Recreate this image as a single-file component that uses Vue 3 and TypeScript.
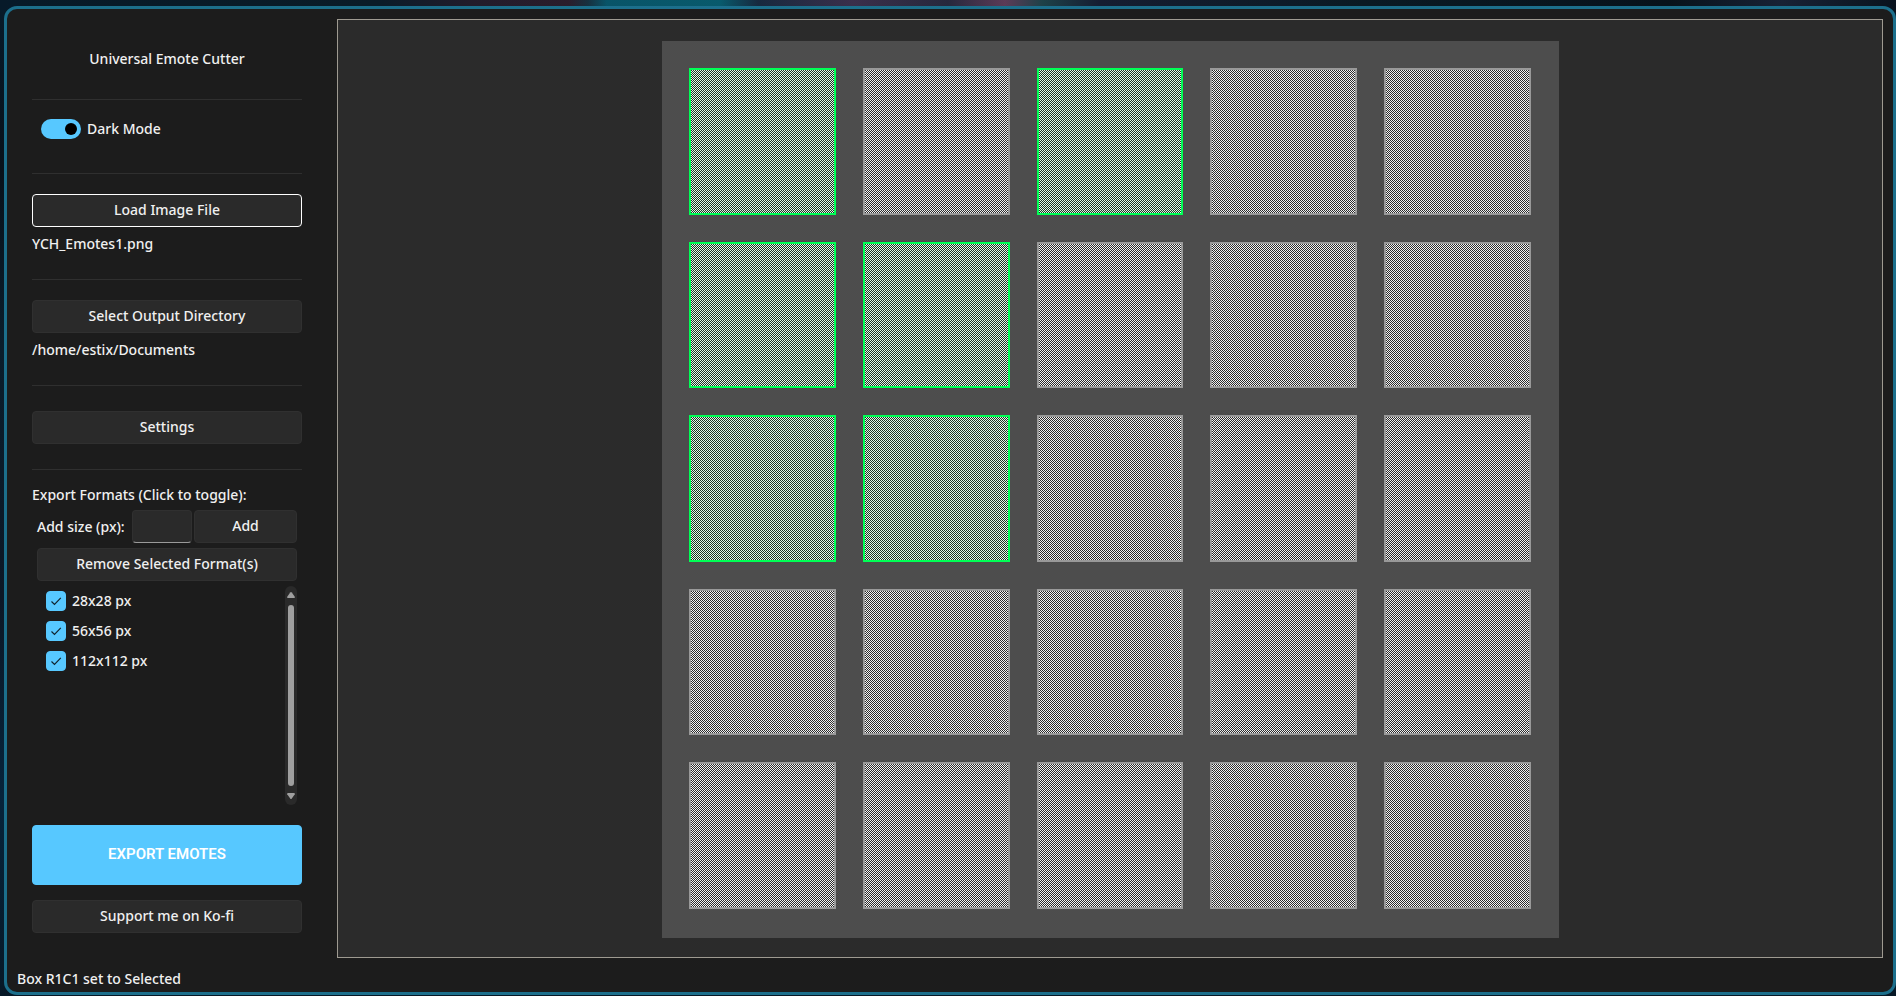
<script setup lang="ts">
import { computed, ref } from 'vue'

interface ExportFormat {
  size: number
  enabled: boolean
}

const GRID_SIZE = 5

const darkMode = ref(true)
const imageName = ref('YCH_Emotes1.png')
const outputDirectory = ref('/home/estix/Documents')
const newSize = ref('')
const status = ref('Box R1C1 set to Selected')

const formats = ref<ExportFormat[]>([
  { size: 28, enabled: true },
  { size: 56, enabled: true },
  { size: 112, enabled: true },
])

const selected = ref<Set<number>>(new Set([0, 2, 5, 6, 10, 11]))
const boxes = computed(() => Array.from({ length: GRID_SIZE * GRID_SIZE }, (_, i) => i))

function boxName(index: number): string {
  return `R${Math.floor(index / GRID_SIZE) + 1}C${(index % GRID_SIZE) + 1}`
}

function toggleBox(index: number): void {
  const next = new Set(selected.value)
  const on = !next.delete(index)
  if (on) next.add(index)
  selected.value = next
  status.value = `Box ${boxName(index)} set to ${on ? 'Selected' : 'Unselected'}`
}

function addFormat(): void {
  const size = Number.parseInt(newSize.value, 10)
  if (size > 0 && !formats.value.some((f) => f.size === size)) {
    formats.value.push({ size, enabled: true })
  }
  newSize.value = ''
}

function removeFormats(): void {
  formats.value = formats.value.filter((f) => !f.enabled)
}
</script>

<template>
  <div class="desktop">
    <div class="window">
      <div class="body">
        <aside class="sidebar">
          <h1 class="title">Universal Emote Cutter</h1>
          <hr class="rule" />
          <label class="switch">
            <input v-model="darkMode" type="checkbox" class="switch-input" />
            <span>Dark Mode</span>
          </label>
          <hr class="rule" />
          <button type="button" class="btn focused">Load Image File</button>
          <p class="path">{{ imageName }}</p>
          <hr class="rule" />
          <button type="button" class="btn">Select Output Directory</button>
          <p class="path">{{ outputDirectory }}</p>
          <hr class="rule" />
          <button type="button" class="btn settings">Settings</button>
          <hr class="rule" />

          <section class="formats">
            <h2 class="heading">Export Formats (Click to toggle):</h2>
            <form class="add-row" @submit.prevent="addFormat">
              <label for="size">Add size (px):</label>
              <input id="size" v-model="newSize" type="text" class="entry" />
              <button type="submit" class="btn add">Add</button>
            </form>
            <button type="button" class="btn remove" @click="removeFormats">Remove Selected Format(s)</button>
            <div class="list">
              <div class="items">
                <label v-for="format in formats" :key="format.size" class="item">
                  <span class="check">
                    <input v-model="format.enabled" type="checkbox" class="check-input" />
                    <svg v-if="format.enabled" class="tick" viewBox="0 0 20 20" aria-hidden="true">
                      <path d="M5.5 10.5 L8.5 13.5 L14.8 6.8" />
                    </svg>
                  </span>
                  <span>{{ format.size }}x{{ format.size }} px</span>
                </label>
              </div>
              <div class="scrollbar" aria-hidden="true">
                <svg viewBox="0 0 8 6"><path d="M3.2 0.6 Q4 -0.4 4.8 0.6 L7.8 4.8 Q8 6 7 6 H1 Q0 6 0.2 4.8 Z" /></svg>
                <div class="thumb"></div>
                <svg viewBox="0 0 8 6"><path d="M3.2 5.4 Q4 6.4 4.8 5.4 L7.8 1.2 Q8 0 7 0 H1 Q0 0 0.2 1.2 Z" /></svg>
              </div>
            </div>
          </section>

          <button type="button" class="btn export">EXPORT EMOTES</button>
          <button type="button" class="btn support">Support me on Ko-fi</button>
        </aside>

        <main class="canvas">
          <div class="sheet">
            <button
              v-for="i in boxes"
              :key="i"
              type="button"
              class="box"
              :class="{ on: selected.has(i) }"
              :aria-label="boxName(i)"
              :aria-pressed="selected.has(i)"
              @click="toggleBox(i)"
            ></button>
          </div>
        </main>
      </div>
      <footer class="status">{{ status }}</footer>
    </div>
  </div>
</template>

<style>
body {
  margin: 0;
  background: #07131c;
}
</style>

<style scoped>
* {
  box-sizing: border-box;
}

.desktop {
  display: flex;
  height: 100vh;
  padding: 6px 0 1px 4px;
  background:
    linear-gradient(
        90deg,
        #071a29 0%,
        #0a1c29 20%,
        #221c2b 25%,
        #2a1d2c 30%,
        #17303f 31%,
        #085468 32%,
        #085a6c 38%,
        #17293f 40%,
        #3a2f4b 45%,
        #26283d 50%,
        #5c3b57 53%,
        #1d4148 55%,
        #151d31 58%,
        #0a1a24 72%,
        #07121b 88%,
        #182235 94%,
        #09131e 100%
      )
      top / 100% 12px no-repeat,
    linear-gradient(180deg, #071a29 0%, #08111a 17%, #0a1d2b 35%, #0c1725 60%, #06233a 80%, #071826 100%);
  color: #f0f0f0;
  font: 500 14px/20px 'Noto Sans', 'Open Sans', sans-serif;
}

.window {
  flex: 1;
  display: flex;
  flex-direction: column;
  min-width: 0;
  border: 3px solid #1c6f8c;
  border-radius: 13px;
  background: #1c1c1c;
}

.body {
  flex: 1;
  display: flex;
  min-height: 0;
  padding: 10px 10px 0 25px;
}

.sidebar {
  flex: 0 0 270px;
  display: flex;
  flex-direction: column;
  margin-right: 35px;
  padding: 30px 0 25px;
}

.title,
.heading,
.path {
  margin: 0;
  font-size: 14px;
  font-weight: 500;
}

.title {
  margin-bottom: 30px;
  text-align: center;
}

.rule {
  flex: none;
  width: 100%;
  height: 1px;
  margin: 0;
  border: 0;
  background: #2f2f2f;
}

.switch {
  display: flex;
  align-items: center;
  gap: 6px;
  margin: 19px 0 34px 9px;
}

.switch-input {
  display: flex;
  align-items: center;
  justify-content: flex-end;
  width: 40px;
  height: 20px;
  margin: 0;
  padding: 4px;
  border-radius: 10px;
  background: #57c8ff;
  appearance: none;
}

.switch-input::before {
  content: '';
  width: 12px;
  height: 12px;
  border-radius: 50%;
  background: #000;
}

.switch-input:not(:checked) {
  justify-content: flex-start;
  background: #5a5a5a;
}

.btn {
  flex: none;
  height: 33px;
  padding: 0 8px 2px;
  border: 1px solid #303030;
  border-radius: 4px;
  background: #2a2a2a;
  color: inherit;
  font: inherit;
}

.rule + .btn {
  margin-top: 20px;
}

.focused {
  border-color: #fff;
}

.path {
  margin: 7px 0 25px;
}

.rule + .settings {
  margin: 25px 0;
}

.formats {
  flex: 1;
  display: flex;
  flex-direction: column;
  gap: 5px;
  min-height: 0;
  padding-top: 15px;
}

.add-row {
  display: flex;
  align-items: center;
  gap: 2px;
  margin: 0 5px;
}

.add-row label {
  flex: none;
  width: 93px;
  white-space: nowrap;
}

.entry {
  width: 60px;
  height: 33px;
  padding: 0 8px;
  border: 1px solid #303030;
  border-bottom-color: #9a9a9a;
  border-radius: 4px;
  outline: 0;
  background: #2a2a2a;
  color: inherit;
  font: inherit;
}

.add {
  flex: 1;
}

.remove {
  margin: 0 5px;
}

.list {
  flex: 1;
  display: flex;
  justify-content: space-between;
  min-height: 0;
  margin: 0 5px;
}

.items {
  display: flex;
  flex-direction: column;
  gap: 10px;
  padding: 5px 9px;
}

.item {
  display: flex;
  align-items: center;
  gap: 6px;
}

.check {
  display: grid;
  width: 20px;
  height: 20px;
}

.check-input,
.tick {
  grid-area: 1 / 1;
  width: 20px;
  height: 20px;
  margin: 0;
}

.check-input {
  border: 1px solid #8a8a8a;
  border-radius: 4px;
  appearance: none;
}

.check-input:checked {
  border-color: #57c8ff;
  background: #57c8ff;
}

.tick {
  fill: none;
  stroke: #10222c;
  stroke-width: 1.2;
  pointer-events: none;
}

.scrollbar {
  display: flex;
  flex-direction: column;
  align-items: center;
  gap: 7px;
  width: 12px;
  padding: 6px 0;
  border-radius: 6px;
  background: #2a2a2a;
}

.scrollbar svg {
  width: 8px;
  height: 6px;
  fill: #9f9f9f;
}

.thumb {
  flex: 1;
  width: 6px;
  border-radius: 3px;
  background: #9f9f9f;
}

.export {
  height: 60px;
  margin: 20px 0 15px;
  border-color: #57c8ff;
  background: #57c8ff;
  color: #fff;
  font: 600 15px/20px Roboto, Inter, sans-serif;
}

.canvas {
  flex: 1;
  display: flex;
  justify-content: center;
  min-width: 0;
  padding: 21px 0 19px 1px;
  border: 1px solid #9e9a91;
  background: #2b2b2b;
}

.sheet {
  display: grid;
  grid-template: repeat(5, 1fr) / repeat(5, 1fr);
  gap: 27px;
  height: 100%;
  aspect-ratio: 1;
  padding: 27px 28px 29px 27px;
  background: #4d4d4d;
}

.box {
  min-width: 0;
  padding: 0;
  border: 2px solid #999;
  border-radius: 0;
  background: repeating-conic-gradient(#f3f3f3 0% 25%, #2b2b2b 0% 50%) 0 0 / 2px 2px;
}

.box.on {
  border-color: #00ff55;
  background-image: repeating-conic-gradient(#e3fbe9 0% 25%, #1d3324 0% 50%);
}

.status {
  padding: 11px 10px 3px;
}
</style>
